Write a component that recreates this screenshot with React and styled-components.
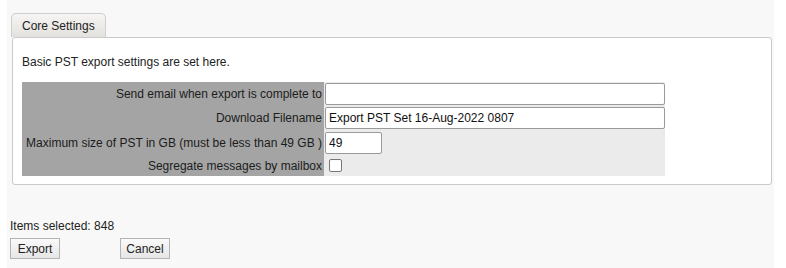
import React from "react";
import styled, { createGlobalStyle } from "styled-components";

const Global = createGlobalStyle`
  html, body {
    margin: 0;
    background: #ffffff;
  }
  body {
    font-family: "Liberation Sans", Arial, sans-serif;
    font-size: 12px;
    color: #222;
  }
`;

const Page = styled.div`
  margin: 0 12px 0 7px;
  min-height: 268px;
  background: #f8f8f8;
  padding: 13px 0 0 4px;
  box-sizing: border-box;
`;

const Tab = styled.div`
  width: 95px;
  height: 24px;
  box-sizing: border-box;
  border: 1px solid #cfcfcf;
  border-bottom: none;
  border-radius: 5px 5px 0 0;
  background: linear-gradient(#f6f5f3, #e3e1dd);
  padding: 5px 0 0 10px;
  font-size: 12px;
  color: #222;
`;

const Panel = styled.div`
  width: 760px;
  height: 148px;
  margin-left: 1px;
  box-sizing: border-box;
  border: 1px solid #cacaca;
  border-radius: 3px;
  background: #fff;
  padding: 17px 0 0 9px;
`;

const Intro = styled.div`
  font-size: 12px;
  margin-bottom: 13px;
`;

const Form = styled.div`
  display: grid;
  grid-template-columns: 302px 341px;
  grid-template-rows: 24px 24px 25px 21px;
`;

const Label = styled.div`
  background: #a4a4a4;
  padding-right: 2px;
  display: flex;
  align-items: center;
  justify-content: flex-end;
  white-space: nowrap;
  font-size: 12px;
  color: #1c1c1c;
`;

const Cell = styled.div`
  background: #ebebeb;
  display: flex;
  align-items: center;
  padding-left: 1px;
`;

const Input = styled.input`
  width: ${(p) => p.$w}px;
  height: 22px;
  box-sizing: border-box;
  border: 1px solid #9a9a9a;
  border-radius: 2px;
  background: #fff;
  padding: 0 3px;
  margin: 0;
  font-family: "Liberation Sans", Arial, sans-serif;
  font-size: 12px;
  color: #111;
  outline: none;
`;

const Check = styled.span`
  display: inline-block;
  width: 13px;
  height: 13px;
  box-sizing: border-box;
  border: 1px solid #777;
  border-radius: 2px;
  background: #fff;
  margin-left: 4px;
`;

const Footer = styled.div`
  padding: 34px 0 0 0;
  margin-left: -1px;
`;

const Selected = styled.div`
  font-size: 12px;
  margin-bottom: 5px;
`;

const Buttons = styled.div`
  display: flex;
  gap: 60px;
`;

const Button = styled.button`
  width: 50px;
  height: 21px;
  box-sizing: border-box;
  border: 1px solid #b4b4b4;
  background: linear-gradient(#fafafa, #e6e6e6);
  font-family: "Liberation Sans", Arial, sans-serif;
  font-size: 12px;
  color: #222;
  padding: 0;
  margin: 0;
`;

export default function App() {
  return (
    <>
      <Global />
      <Page>
        <Tab>Core Settings</Tab>
        <Panel>
          <Intro>Basic PST export settings are set here.</Intro>
          <Form>
            <Label>Send email when export is complete to</Label>
            <Cell>
              <Input $w={340} defaultValue="" />
            </Cell>
            <Label>Download Filename</Label>
            <Cell>
              <Input $w={340} defaultValue="Export PST Set 16-Aug-2022 0807" />
            </Cell>
            <Label>Maximum size of PST in GB (must be less than 49 GB )</Label>
            <Cell>
              <Input $w={57} defaultValue="49" />
            </Cell>
            <Label>Segregate messages by mailbox</Label>
            <Cell>
              <Check />
            </Cell>
          </Form>
        </Panel>
        <Footer>
          <Selected>Items selected: 848</Selected>
          <Buttons>
            <Button>Export</Button>
            <Button>Cancel</Button>
          </Buttons>
        </Footer>
      </Page>
    </>
  );
}
